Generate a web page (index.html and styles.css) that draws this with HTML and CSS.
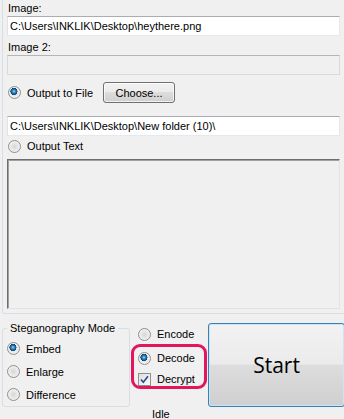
FILE: index.html
```html
<!DOCTYPE html>
<html lang="en">
<head>
  <meta charset="UTF-8">
  <meta name="viewport" content="width=device-width, initial-scale=1.0">
  <title>Steganography</title>
  <link rel="stylesheet" href="styles.css">
</head>
<body>
  <div class="output-group">
    <div class="label">Image:</div>
    <div class="textbox">C:\Users\INKLIK\Desktop\heythere.png</div>
    <div class="label label-gap">Image 2:</div>
    <div class="textbox disabled"></div>

    <div class="file-row">
      <label class="option file-option"><span class="radio checked"></span>Output to File</label>
      <button class="win-btn choose">Choose...</button>
    </div>
    <div class="textbox path">C:\Users\INKLIK\Desktop\New folder (10)\</div>

    <label class="option text-option"><span class="radio"></span>Output Text</label>
    <div class="output-box"></div>
  </div>

  <div class="controls">
    <fieldset class="mode">
      <legend>Steganography Mode</legend>
      <label class="option mode-row"><span class="radio checked"></span>Embed</label>
      <label class="option mode-row"><span class="radio"></span>Enlarge</label>
      <label class="option mode-row"><span class="radio"></span>Difference</label>
    </fieldset>

    <div class="actions">
      <label class="option encode-row"><span class="radio"></span>Encode</label>
      <div class="highlight">
        <label class="option decode-row"><span class="radio checked"></span>Decode</label>
        <label class="option decrypt-row">
          <span class="checkbox">
            <svg width="11" height="11" viewBox="0 0 11 11"><path d="M2 5.5 L4.3 8.3 L9 2.2" fill="none" stroke="#2a4a8f" stroke-width="1.6"/></svg>
          </span>Decrypt</label>
      </div>
    </div>

    <button class="win-btn start">Start</button>
  </div>

  <div class="status">Idle</div>
</body>
</html>
```

FILE: styles.css
```css
/* Window */
body {
  margin: 0;
  height: 419px;
  overflow: hidden;
  background: #f0f0f0;
  color: #000;
  font-family: "Liberation Sans", Arial, sans-serif;
  font-size: 11px;
}

/* Output group box (top edge is scrolled off) */
.output-group {
  margin-left: 2px;
  padding: 2px 0 4px 4px;
  border-left: 1px solid #d5dfe5;
  border-bottom: 1px solid #d5dfe5;
  border-bottom-left-radius: 3px;
}

.label {
  height: 13px;
  line-height: 13px;
  margin-bottom: 1px;
  padding-left: 1px;
}

.label-gap {
  margin-top: 5px;
}

.textbox {
  box-sizing: border-box;
  width: 333px;
  height: 20px;
  line-height: 18px;
  padding-left: 2px;
  background: #fff;
  border: 1px solid #e3e9ef;
  border-top-color: #abadb3;
  border-left-color: #e2e3ea;
  white-space: nowrap;
}

.textbox.disabled {
  background: #f0f0f0;
  border-color: #d9d9d9;
  border-top-color: #b5b5b5;
}

/* Radio buttons and checkbox */
.option {
  display: flex;
  align-items: center;
  gap: 6px;
  white-space: nowrap;
}

.radio {
  flex: none;
  box-sizing: border-box;
  width: 13px;
  height: 13px;
  border-radius: 50%;
  border: 1px solid #8e8f8f;
  background: radial-gradient(circle at 50% 50%, #d6d6d6 0, #e8e8e8 45%, #fbfbfb 100%);
}

.radio.checked {
  background:
    radial-gradient(circle at 45% 40%, #9ee4ff 0, #3a9ad6 1.2px, #1a5f93 2.6px, #0d3d66 3.4px, transparent 3.7px),
    radial-gradient(circle at 50% 50%, #d6d6d6 0, #e8e8e8 45%, #fbfbfb 100%);
}

.checkbox {
  flex: none;
  box-sizing: border-box;
  width: 13px;
  height: 13px;
  border: 1px solid #8e8f8f;
  background: linear-gradient(135deg, #dedede, #fafafa);
  display: flex;
  align-items: center;
  justify-content: center;
}

/* Buttons */
.win-btn {
  box-sizing: border-box;
  margin: 0;
  padding: 0;
  font-family: inherit;
  font-size: 11px;
  color: #000;
  border: 1px solid #707070;
  border-radius: 3px;
  background: linear-gradient(#f2f2f2 0, #ebebeb 49%, #dddddd 50%, #cfcfcf 100%);
  box-shadow: inset 0 0 0 1px rgba(255, 255, 255, 0.7);
}

.file-row {
  display: flex;
  align-items: center;
  height: 21px;
  margin-top: 7px;
  padding-left: 1px;
}

.file-option {
  width: 95px;
}

.choose {
  width: 72px;
  height: 21px;
}

.path {
  margin-top: 13px;
}

.text-option {
  height: 14px;
  margin-top: 3px;
  padding-left: 1px;
}

.output-box {
  box-sizing: border-box;
  width: 333px;
  height: 150px;
  margin-top: 6px;
  background: #f0f0f0;
  border: 1px solid #e3e3e3;
  border-top-color: #6d6d6d;
  border-left-color: #6d6d6d;
  box-shadow: inset 1px 1px 0 #a0a0a0;
}

/* Bottom controls */
.controls {
  display: flex;
  align-items: flex-start;
  margin-top: 8px;
}

.mode {
  flex: none;
  box-sizing: border-box;
  width: 128px;
  margin: 0 0 0 2px;
  padding: 2px 0 0 4px;
  border: 1px solid #d5dfe5;
  border-radius: 3px;
}

.mode legend {
  padding: 0 3px;
  line-height: 13px;
}

.mode-row {
  height: 23px;
}

.actions {
  flex: none;
  box-sizing: border-box;
  width: 76px;
  margin-left: 1px;
  padding: 2px 0 0 7px;
}

.encode-row {
  height: 20px;
}

.highlight {
  box-sizing: border-box;
  width: 76px;
  margin-left: -7px;
  padding-left: 4px;
  border: 3px solid #e2165f;
  border-radius: 9px;
}

.decode-row {
  height: 22px;
}

.decrypt-row {
  height: 17px;
  align-items: flex-end;
  line-height: 13px;
}

.start {
  flex: none;
  width: 137px;
  height: 84px;
  margin: 1px 0 0 1px;
  font-family: "Open Sans", "Noto Sans", sans-serif;
  font-size: 21px;
  border-color: #3c7fb1;
  background: linear-gradient(#f2f2f2 0, #ebebeb 49%, #dddddd 50%, #cfcfcf 100%);
  box-shadow: inset 0 0 0 1px #c7e6f8;
}

.status {
  padding: 1px 0 0 152px;
  line-height: 13px;
}
```
